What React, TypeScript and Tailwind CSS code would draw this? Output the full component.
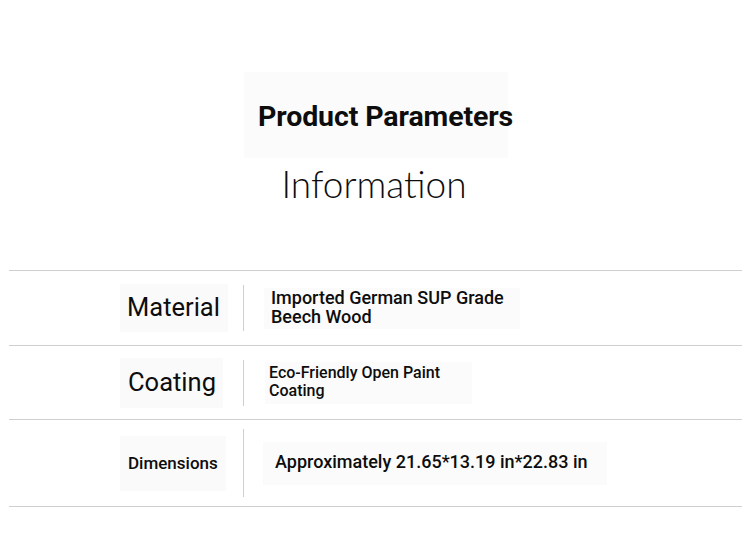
export default function App() {
  const rows = [
    {
      label: "Material",
      labelCls: "text-[25.5px] font-normal",
      labelBox: "w-[108px] h-[48px] pl-[7px]",
      lineH: "h-[46px]",
      rowH: "h-[75px]",
      value: (
        <>
          Imported German SUP Grade
          <br />
          Beech Wood
        </>
      ),
      valueCls: "text-[18px] leading-[19px] font-medium w-[256px] h-[41px] pl-[7px] pb-[2px]",
      ml: "ml-[20px]",
    },
    {
      label: "Coating",
      labelCls: "text-[25.5px] font-normal",
      labelBox: "w-[103px] h-[50px] pl-[8px]",
      lineH: "h-[46px]",
      rowH: "h-[74px]",
      value: (
        <>
          Eco-Friendly Open Paint
          <br />
          Coating
        </>
      ),
      valueCls: "text-[16px] leading-[18px] font-medium w-[207px] h-[42px] pl-[4px] pb-[1px]",
      ml: "ml-[21px]",
    },
    {
      label: "Dimensions",
      labelCls: "text-[17px] font-medium",
      labelBox: "w-[106px] h-[55px] pl-[8px]",
      lineH: "h-[68px]",
      rowH: "h-[87px]",
      value: <>Approximately 21.65*13.19 in*22.83 in</>,
      valueCls: "text-[18px] leading-[20px] font-medium w-[344px] h-[43px] pl-[12px] pb-[3px]",
      ml: "ml-[19px]",
    },
  ];
  return (
    <div
      className="w-[750px] h-[547px] bg-white text-[#0d0d0d] overflow-hidden"
      style={{ fontFamily: "Roboto, 'Liberation Sans', sans-serif" }}
    >
      <div className="flex flex-col items-center pt-[72px]">
        <div className="w-[264px] h-[86px] bg-[#fbfbfb] flex items-center pl-[14px] ml-[2px]">
          <span className="text-[28.5px] font-bold leading-none tracking-[-0.1px] mt-[5px] whitespace-nowrap">
            Product Parameters
          </span>
        </div>
        <div
          className="mt-[2px] text-[37px] leading-[48px] font-light -ml-[2px]"
          style={{ fontFamily: "Lato, sans-serif" }}
        >
          Information
        </div>
      </div>
      <div className="mx-[9px] mt-[62px] border-b border-[#cfcfcf] w-[733px]">
        {rows.map((r) => (
          <div key={r.label} className={`flex items-center border-t border-[#cfcfcf] ${r.rowH}`}>
            <div className="w-[234px] flex justify-start pl-[111px]">
              <div className={`bg-[#fafafa] flex items-center ${r.labelBox}`}>
                <span className={`${r.labelCls} leading-none`}>{r.label}</span>
              </div>
            </div>
            <div className={`w-px bg-[#cfcfcf] ${r.lineH}`} />
            <div className={`${r.ml} bg-[#fbfbfb] flex items-center ${r.valueCls}`}>
              <div>{r.value}</div>
            </div>
          </div>
        ))}
      </div>
    </div>
  );
}
